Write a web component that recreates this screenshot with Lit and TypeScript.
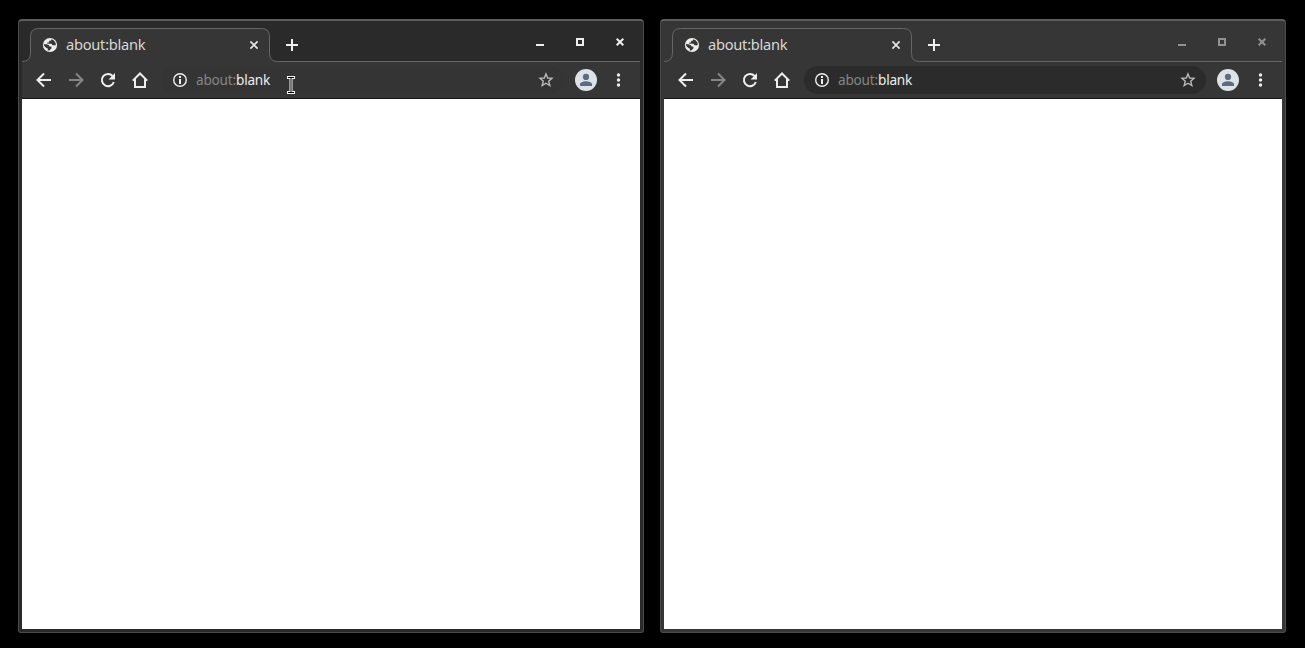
import { LitElement, html, css } from "lit";
import { customElement, property } from "lit/decorators.js";

@customElement("browser-window")
class BrowserWindow extends LitElement {
  @property({ type: Boolean, reflect: true }) active = false;

  static styles = css`
    :host { display: block; box-sizing: border-box; width: 626px; height: 614px; background: #363636;
      border: 1px solid #4b4b4b; border-top: 2px solid #5c5c5c; border-radius: 4px 4px 3px 3px; padding: 0 3px 3px;
      overflow: hidden; font-family: "Noto Sans", sans-serif; color: #d8d8d6; --field: #2b2b2b; --controls: #929290; }
    :host([active]) { background: #2a2a2a; --field: #343434; --controls: #eeeeec; }
    svg { display: block; flex: none; }
    .strip { height: 41px; display: grid; grid-template: 41px / 618px; }
    .strip > * { grid-area: 1 / 1; }
    .tabs { display: flex; align-items: center; padding-top: 7px; height: 34px; }
    .globe { margin-left: 20px; }
    .title { margin: -2px 0 0 8px; width: 183px; font-size: 14.67px; letter-spacing: -0.26px; line-height: 20px; white-space: nowrap; }
    .plus { margin-left: 26px; }
    .controls { margin: -6px 4px 0 auto; color: var(--controls); }
    .toolbar { height: 36px; background: #363636; display: flex; align-items: center; border-bottom: 1px solid #151515; }
    .nav { margin-left: 16px; }
    .nav.first { margin-left: 14px; }
    .field { margin-left: 14px; width: 402px; height: 28px; border-radius: 14px; background: var(--field); display: flex; align-items: center; }
    .info { margin-left: 10px; }
    .url { margin-left: 8px; font-size: 13.6px; letter-spacing: -0.2px; line-height: 20px; color: #858583; white-space: nowrap; }
    .url b { font-weight: 400; color: #eeeeec; }
    .star { margin-left: auto; margin-right: 10px; }
    .avatar { margin-left: 11px; }
    .menu { margin-left: 13px; }
    .page { height: 530px; background: #fff; }
  `;

  render() {
    return html`
      <div class="strip">
        <svg width="618" height="41" viewBox="0 0 618 41">
          <path d="M0 40.5Q8.5 40.5 8.5 32V15.5Q8.5 7.5 16.5 7.5H239.5Q247.5 7.5 247.5 15.5V32.5Q247.5 40.5 255.5 40.5H618V41H0Z" fill="#363636"/>
          <path d="M0 40.5Q8.5 40.5 8.5 32V15.5Q8.5 7.5 16.5 7.5H239.5Q247.5 7.5 247.5 15.5V32.5Q247.5 40.5 255.5 40.5H618" fill="none" stroke="#666"/>
        </svg>
        <div class="tabs">
          <svg class="globe" width="16" height="16" viewBox="0 0 16 16">
            <circle cx="8" cy="8" r="7.1" fill="#eeeeec"/>
            <path d="M2 7.1L5.4 7.6Q7.4 8 7.4 9.6L9.4 9.6V11.4L7.2 13.5L5.8 13.6V11.4L4.4 10.9L2.1 8.8ZM9.5 2.2L8.8 3.8H7.1V5.6H5.3V6.8H9.5L10.5 8.2H13.8Q14.2 4.1 9.5 2.2Z" fill="#363636"/>
          </svg>
          <span class="title">about:blank</span>
          <svg width="10" height="10" viewBox="0 0 10 10"><path d="M1.4 1.4L8.6 8.6M8.6 1.4L1.4 8.6" stroke="#e4e4e2" stroke-width="1.7"/></svg>
          <svg class="plus" width="14" height="14" viewBox="0 0 14 14"><path d="M7 1V13M1 7H13" stroke="#eeeeec" stroke-width="2"/></svg>
          <svg class="controls" width="100" height="12" viewBox="0 0 100 12">
            <path d="M0 8H8V10H0ZM40 2H48V10H40ZM42 4V8H46V4Z" fill="currentColor" fill-rule="evenodd"/>
            <path d="M80.7 2.7L87.3 9.3M87.3 2.7L80.7 9.3" stroke="currentColor" stroke-width="2"/>
          </svg>
        </div>
      </div>
      <div class="toolbar">
        <svg class="nav first" width="16" height="16" viewBox="0 0 16 16"><path d="M15 8H2.2M8 1.5L1.5 8L8 14.5" fill="none" stroke="#eeeeec" stroke-width="2"/></svg>
        <svg class="nav" width="16" height="16" viewBox="0 0 16 16"><path d="M1 8H13.8M8 1.5L14.5 8L8 14.5" fill="none" stroke="#858583" stroke-width="2"/></svg>
        <svg class="nav" width="16" height="16" viewBox="0 0 16 16"><path d="M12.6 4A6.1 6.1 0 1 0 13.8 10" fill="none" stroke="#eeeeec" stroke-width="2"/><path d="M15 1V7.4H8.6Z" fill="#eeeeec"/></svg>
        <svg class="nav" width="16" height="16" viewBox="0 0 16 16"><path d="M.8 8.6L8 1.5L15.2 8.6M3 7.2V15H13V7.2" fill="none" stroke="#eeeeec" stroke-width="2"/></svg>
        <div class="field">
          <svg class="info" width="16" height="16" viewBox="0 0 16 16"><circle cx="8" cy="8" r="6.3" fill="none" stroke="#eeeeec" stroke-width="1.4"/><path d="M7 4H9V6H7ZM7 7H9V12H7Z" fill="#eeeeec"/></svg>
          <span class="url">about:<b>blank</b></span>
          <svg class="star" width="16" height="16" viewBox="0 0 16 16"><path d="M8 1.9L9.7 6L14 6.4L10.7 9.3L11.8 13.5L8 11.2L4.2 13.5L5.3 9.3L2 6.4L6.3 6Z" fill="none" stroke="#b8b8b6" stroke-width="1.4"/></svg>
        </div>
        <svg class="avatar" width="22" height="22" viewBox="0 0 22 22"><circle cx="11" cy="11" r="11" fill="#dee1e6"/><circle cx="11" cy="7.9" r="3.1" fill="#5f6b7e"/><path d="M5 17V15.2C5 13.2 8.5 12.2 11 12.2S17 13.2 17 15.2V17Z" fill="#5f6b7e"/></svg>
        <svg class="menu" width="16" height="16" viewBox="0 0 16 16"><g fill="#eeeeec"><circle cx="8.5" cy="3" r="1.7"/><circle cx="8.5" cy="8" r="1.7"/><circle cx="8.5" cy="13" r="1.7"/></g></svg>
      </div>
      <div class="page"></div>
    `;
  }
}

@customElement("app-root")
class AppRoot extends LitElement {
  static styles = css`
    :host { display: block; position: relative; width: 1305px; height: 648px; overflow: hidden; background: #000; }
    .desktop { display: flex; gap: 16px; padding: 19px 0 0 18px; }
    .cursor { position: absolute; left: 287px; top: 76px; }
  `;

  render() {
    return html`
      <div class="desktop">
        <browser-window active></browser-window>
        <browser-window></browser-window>
      </div>
      <svg class="cursor" width="8" height="18" viewBox="0 0 8 18">
        <path d="M0 0H8V3H5.5V15H8V18H0V15H2.5V3H0Z" fill="#f4f4f4"/>
        <path d="M1 1H7V2H4.5V16H7V17H1V16H3.5V2H1Z" fill="#000"/>
      </svg>
    `;
  }
}
